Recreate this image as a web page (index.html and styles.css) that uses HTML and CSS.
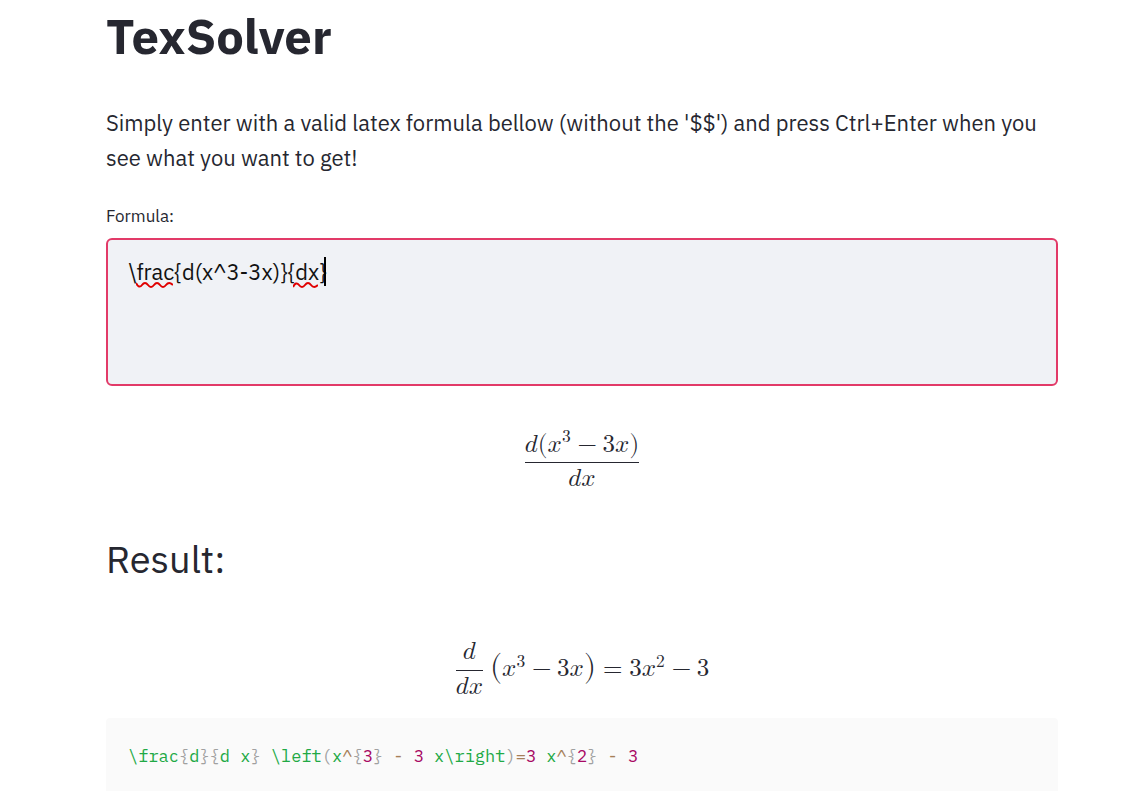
FILE: index.html
```html
<!DOCTYPE html>
<html lang="en">
<head>
<meta charset="utf-8">
<meta name="viewport" content="width=device-width, initial-scale=1">
<title>TexSolver</title>
<link rel="stylesheet" href="styles.css">
</head>
<body>
<main class="page">
  <h1 class="title">TexSolver</h1>
  <p class="intro">Simply enter with a valid latex formula bellow (without the '$$') and press Ctrl+Enter when you see what you want to get!</p>
  <label class="label" for="formula">Formula:</label>
  <div class="field">
    <textarea class="input" id="formula" spellcheck="false">\frac{d(x^3-3x)}{dx}</textarea>
    <svg class="squiggle squiggle-frac" width="37" height="6" viewBox="0 0 37 6" aria-hidden="true"><path d="M0 1 Q3 7 6 3 T12 3 T18 3 T24 3 T30 3 T37 3"/></svg>
    <svg class="squiggle squiggle-dx" width="25" height="6" viewBox="0 0 25 6" aria-hidden="true"><path d="M0 5 Q3 -1 6 3 T12 3 T18 3 T25 3"/></svg>
    <span class="caret"></span>
  </div>
  <div class="formula">
    <math display="block">
      <mfrac>
        <mrow><mi>d</mi><mo stretchy="false">(</mo><msup><mi>x</mi><mn>3</mn></msup><mo>−</mo><mn>3</mn><mi>x</mi><mo stretchy="false">)</mo></mrow>
        <mrow><mi>d</mi><mi>x</mi></mrow>
      </mfrac>
    </math>
  </div>
  <h2 class="heading">Result:</h2>
  <div class="formula">
    <math display="block">
      <mfrac><mi>d</mi><mrow><mi>d</mi><mi>x</mi></mrow></mfrac>
      <mspace width="6px"/>
      <mrow><mo class="paren" form="prefix" stretchy="false">(</mo><msup><mi>x</mi><mn>3</mn></msup><mo>−</mo><mn>3</mn><mi>x</mi><mo class="paren" form="postfix" stretchy="false">)</mo></mrow>
      <mo>=</mo><mn>3</mn><msup><mi>x</mi><mn>2</mn></msup><mo>−</mo><mn>3</mn>
    </math>
  </div>
  <pre class="code"><code>\frac<span class="p">{</span>d<span class="p">}{</span>d x<span class="p">}</span> \left<span class="p">(</span>x<span class="o">^</span><span class="p">{</span><span class="n">3</span><span class="p">}</span> <span class="o">-</span> <span class="n">3</span> x\right<span class="p">)</span><span class="o">=</span><span class="n">3</span> x<span class="o">^</span><span class="p">{</span><span class="n">2</span><span class="p">}</span> <span class="o">-</span> <span class="n">3</span></code></pre>
</main>
</body>
</html>
```
FILE: styles.css
```css
* { box-sizing: border-box; }
body {
  margin: 0;
  background: #fff;
  color: #262730;
  font-family: "IBM Plex Sans", Roboto, "Noto Sans", sans-serif;
}
.page { padding: 6px 64px 0 106px; }
.title { margin: 0; font-size: 49px; line-height: 60px; font-weight: 700; }
.intro { margin: 39px 0 30px; font-size: 22px; line-height: 35px; }
.label { display: block; margin-bottom: 11px; font-size: 17px; line-height: 22px; }
.field { position: relative; }
.input {
  display: block;
  width: 100%;
  height: 148px;
  padding: 16px 20px;
  border: 2px solid #e23a68;
  border-radius: 6px;
  outline: 0;
  resize: none;
  background: #f0f2f6;
  color: #111;
  font: inherit;
  font-size: 22px;
  line-height: 32px;
}
.squiggle { position: absolute; top: 44px; fill: none; stroke: #e00000; stroke-width: 2; }
.squiggle-frac { left: 30px; }
.squiggle-dx { left: 187px; }
.caret { position: absolute; left: 218px; top: 19px; width: 2px; height: 29px; background: #000; }
.formula {
  display: grid;
  align-items: center;
  min-height: 74px;
  margin-top: 35px;
}
.formula math {
  font-family: "Latin Modern Math", "Liberation Serif", serif;
  font-size: 25px;
}
.formula .paren { font-size: 31px; }
.heading { margin: 40px 0 48px; font-size: 38px; line-height: 48px; font-weight: 400; }
.code {
  margin: 13px 0 0;
  padding: 25px 22px;
  border-radius: 4px;
  background: #fafafa;
  color: #21a945;
  font-family: "IBM Plex Mono", "DejaVu Sans Mono", monospace;
  font-size: 17px;
  line-height: 26px;
  overflow-x: auto;
}
.code code { font: inherit; }
.p { color: #a0a0a0; }
.o { color: #a67f59; }
.n { color: #a80864; }
```
